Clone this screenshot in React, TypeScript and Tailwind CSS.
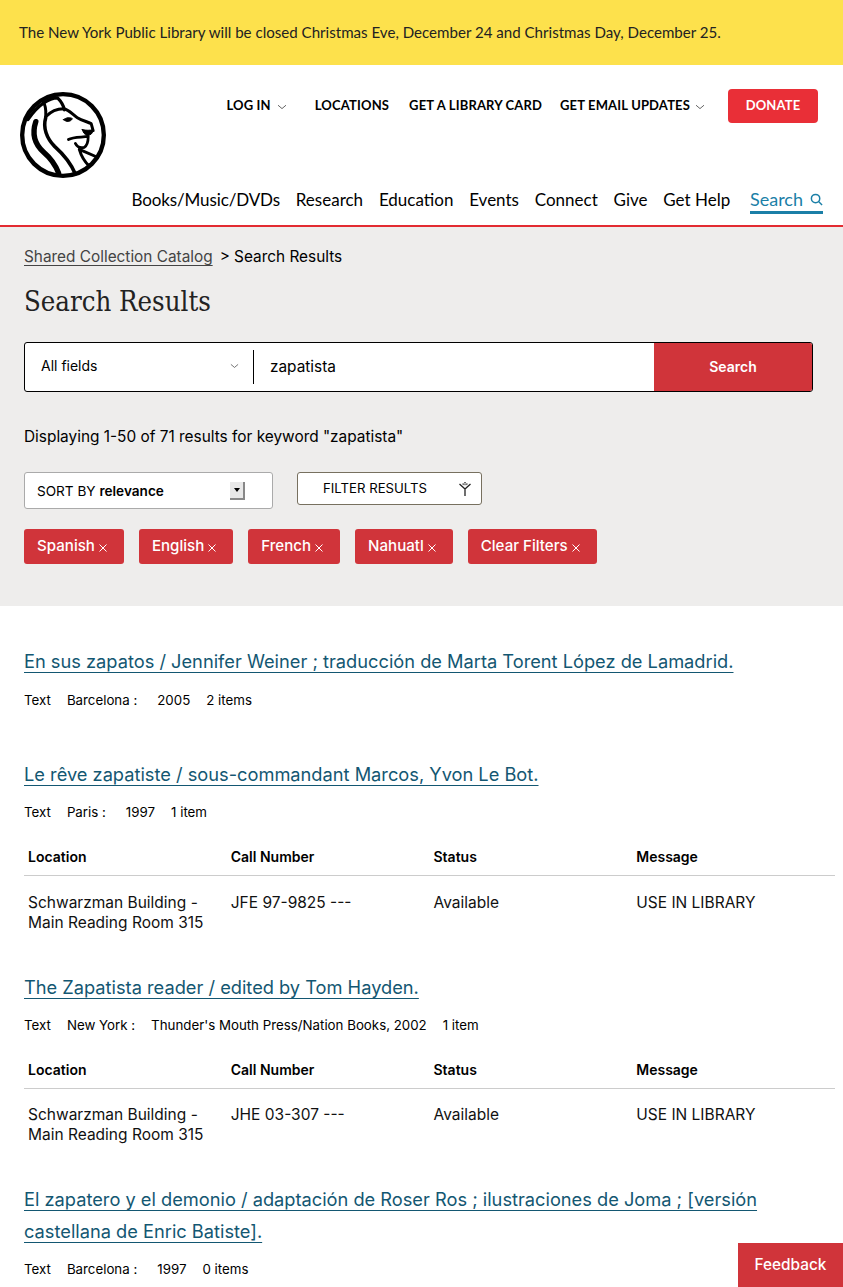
import React from "react";

const kievit = "font-['Lato','Noto_Sans',sans-serif]";

function Lion() {
  return (
    <svg viewBox="0 0 87 87" className="w-[86px] h-[86px] block" fill="none" stroke="#000" strokeLinecap="round" strokeLinejoin="round">
      <circle cx="43.5" cy="43.5" r="41.3" strokeWidth="4.4" fill="#fff" />
      <path d="M8 28 C12 22 18 15 24 11 C30 7 35 6 38 6 C42 10 44 14 45 18" strokeWidth="3.2" />
      <path d="M24 11 C27 16 26 22 26 25" strokeWidth="3" />
      <path d="M26 25 C32 19 38 17 44 17 C50 18 53 23 58 26 C63 29 68 30 72 32 L74 39" strokeWidth="3" />
      <path d="M26 26 C23 36 27 47 35 55 C44 63 51 71 56 83" strokeWidth="3.6" />
      <path d="M16 30 C12 42 15 53 24 61 C31 67 36 74 39 82" strokeWidth="5.4" />
      <path d="M63 38 C67 39 71 39 74 38 C74 42 71 44 68 44 C65 43 64 41 63 38 Z" fill="#000" strokeWidth="1" />
      <path d="M44 28 C47 25.5 51 25.5 53 27 C51 30.5 47 30.5 44 28 Z" fill="#000" strokeWidth="1" />
      <path d="M49 48 C54 45 62 46 69 45 C69 50 68 54 65 56 C61 57 58 56 56 52" strokeWidth="2.8" />
      <path d="M60 58 L76 65 M60 58 C62 65 65 70 70 75" strokeWidth="3" />
    </svg>
  );
}

function Chevron({ className = "" }: { className?: string }) {
  return (
    <svg viewBox="0 0 10 6" className={className} fill="none" stroke="#555" strokeWidth="0.9">
      <path d="M1 1.2 L5 4.6 L9 1.2" />
    </svg>
  );
}

function Tag({ label }: { label: string }) {
  return (
    <span className="flex h-[35px] items-center rounded-[3px] bg-[#d0343a] pl-[13px] pr-[17px] text-[15.1px] font-medium text-white">
      {label}
      <svg viewBox="0 0 8 8" className="ml-[4px] mt-[2px] h-[8px] w-[8px]" fill="none" stroke="#fff" strokeWidth="1">
        <path d="M0.5 0.5 L7.5 7.5 M7.5 0.5 L0.5 7.5" />
      </svg>
    </span>
  );
}

function Title({ children }: { children: React.ReactNode }) {
  return (
    <a className="text-[18.24px] leading-[32px] text-[#135772] underline decoration-1 underline-offset-[4px]">
      {children}
    </a>
  );
}

function Meta({ items }: { items: [string, string][] }) {
  return (
    <div className="flex text-[13.3px] leading-[20px] text-black">
      {items.map(([t, c]) => (
        <span key={t} className={c}>{t}</span>
      ))}
    </div>
  );
}

function Holdings({ call, rowClass }: { call: string; rowClass: string }) {
  return (
    <div className="w-[811px]">
      <div className="grid h-[38px] grid-cols-4 items-center border-b border-[#cccccc] pb-[1px] text-[14px] font-semibold text-black">
        <span className="pl-[4px]">Location</span>
        <span className="pl-[4px]">Call Number</span>
        <span className="pl-[4px]">Status</span>
        <span className="pl-[4px]">Message</span>
      </div>
      <div className={`grid grid-cols-4 text-[15.5px] leading-[19.5px] text-[#111] ${rowClass}`}>
        <span className="pl-[4px]">Schwarzman Building -<br />Main Reading Room 315</span>
        <span className="pl-[4px]">{call}</span>
        <span className="pl-[4px]">Available</span>
        <span className="pl-[4px]">USE IN LIBRARY</span>
      </div>
    </div>
  );
}

export default function App() {
  return (
    <div className="relative h-[1287px] overflow-hidden bg-white font-['Inter',sans-serif] text-black">
      <div className={`flex h-[65px] items-center bg-[#fde14c] pl-[19px] text-[15.1px] text-[#222] ${kievit}`}>
        The New York Public Library will be closed Christmas Eve, December 24 and Christmas Day, December 25.
      </div>

      <header className={`flex h-[162px] border-b-2 border-[#e32b31] ${kievit}`}>
        <div className="pl-[20px] pt-[27px]">
          <Lion />
        </div>
        <div className="flex flex-1 flex-col items-end pr-[20px]">
          <div className="flex h-[58px] items-start pr-[5px] pt-[24px] text-[13px] font-bold tracking-[0.15px] whitespace-nowrap text-black">
            <span className="flex h-[34px] items-center pb-[1px]">LOG IN<Chevron className="ml-[6px] mr-[28px] mt-[3px] h-[6px] w-[10px]" /></span>
            <span className="mr-[20px] flex h-[34px] items-center pb-[1px]">LOCATIONS</span>
            <span className="mr-[18px] flex h-[34px] items-center pb-[1px]">GET A LIBRARY CARD</span>
            <span className="flex h-[34px] items-center pb-[1px]">GET EMAIL UPDATES<Chevron className="ml-[5px] mr-[23px] mt-[3px] h-[6px] w-[10px]" /></span>
            <span className="flex h-[34px] w-[90px] items-center justify-center rounded-[4px] bg-[#e92f37] pb-[1px] text-white">DONATE</span>
          </div>
          <nav className="mt-[64px] flex items-start gap-[15.8px] text-[17px] leading-[24px] whitespace-nowrap text-black">
            <span className="pt-[1px] tracking-[-0.12px]">Books/Music/DVDs</span>
            <span className="pt-[1px]">Research</span>
            <span className="pt-[1px]">Education</span>
            <span className="pt-[1px]">Events</span>
            <span className="pt-[1px]">Connect</span>
            <span className="pt-[1px]">Give</span>
            <span className="pt-[1px]">Get Help</span>
            <span className="ml-[4px] flex items-center gap-[7px] border-b-[3px] border-[#1b7fa7] text-[18px] text-[#1b7fa7]">
              Search
              <svg viewBox="0 0 14 14" className="h-[13px] w-[13px]" fill="none" stroke="#1b7fa7" strokeWidth="1.6">
                <circle cx="6" cy="6" r="4.5" />
                <path d="M9.5 9.5 L13 13" />
              </svg>
            </span>
          </nav>
        </div>
      </header>

      <section className="h-[379px] bg-[#eeedec] px-[24px] pt-[20px]">
        <div className="text-[15.36px] leading-[20px]">
          <span className="text-[#444] underline decoration-1 underline-offset-[3px]">Shared Collection Catalog</span>
          <span className="ml-[7px]">&gt; Search Results</span>
        </div>
        <h1 className="mt-[17px] font-['DejaVu_Serif_Condensed','DejaVu_Serif',serif] text-[27.3px] leading-[36px] font-normal text-[#222]">Search Results</h1>
        <div className="mt-[22px] flex h-[50px] w-[789px] overflow-hidden rounded-[3px] border border-black bg-white">
          <div className="flex w-[228px] items-center justify-between pb-[3px] pl-[16px] pr-[14px] text-[14px]">
            <span>All fields</span>
            <Chevron className="h-[6px] w-[9px]" />
          </div>
          <div className="my-[7px] w-px bg-black" />
          <div className="flex flex-1 items-center pb-[1px] pl-[16px] text-[15.36px]">zapatista</div>
          <div className="flex w-[158px] items-center justify-center bg-[#d0343a] pb-[1px] text-[14px] font-semibold text-white">Search</div>
        </div>
        <div className="mt-[35px] text-[15.4px] leading-[20px]">Displaying 1-50 of 71 results for keyword "zapatista"</div>
        <div className="mt-[25px] flex items-start gap-[24px]">
          <div className="flex h-[37px] w-[249px] items-center justify-between rounded-[3px] border border-[#aaa] bg-white pl-[12px] pr-[27px] pt-[1px] text-[13.6px]">
            <span>SORT BY <b className="font-semibold">relevance</b></span>
            <span className="flex h-[18px] w-[15px] items-center justify-center border-r-2 border-b-2 border-[#888] bg-[#e8e8e8]">
              <span className="h-0 w-0 border-x-[3px] border-t-[4px] border-x-transparent border-t-black" />
            </span>
          </div>
          <div className="flex h-[33px] w-[185px] items-center justify-between rounded-[3px] border border-[#77705f] bg-white pl-[25px] pr-[9px] pt-[1px] text-[13.2px]">
            <span>FILTER RESULTS</span>
            <svg viewBox="0 0 14 16" className="h-[16px] w-[14px]" fill="none" stroke="#222" strokeWidth="1.3">
              <path d="M7 15 V8 M7 8 L1.5 3 M7 8 L12.5 3" />
              <path d="M4.8 2.5 L6 4.5 M9.2 2.5 L8 4.5 M7 1 V4" strokeDasharray="1.4 0.8" />
            </svg>
          </div>
        </div>
        <div className="mt-[20px] flex gap-[15px]">
          <Tag label="Spanish" />
          <Tag label="English" />
          <Tag label="French" />
          <Tag label="Nahuatl" />
          <Tag label="Clear Filters" />
        </div>
      </section>

      <main className="pl-[24px]">
        <div className="mt-[39px]"><Title>En sus zapatos / Jennifer Weiner ; traducción de Marta Torent López de Lamadrid.</Title></div>
        <div className="mt-[13px]">
          <Meta items={[["Text", "mr-[16px]"], ["Barcelona :", "mr-[20px]"], ["2005", "mr-[16px]"], ["2 items", ""]]} />
        </div>

        <div className="mt-[48px]"><Title>Le rêve zapatiste / sous-commandant Marcos, Yvon Le Bot.</Title></div>
        <div className="mt-[12px]">
          <Meta items={[["Text", "mr-[16px]"], ["Paris :", "mr-[20px]"], ["1997", "mr-[16px]"], ["1 item", ""]]} />
        </div>
        <div className="mt-[16px]"><Holdings call="JFE 97-9825 ---" rowClass="pt-[17px]" /></div>

        <div className="mt-[39px]"><Title>The Zapatista reader / edited by Tom Hayden.</Title></div>
        <div className="mt-[12px]">
          <Meta items={[["Text", "mr-[16px]"], ["New York :", "mr-[16px]"], ["Thunder's Mouth Press/Nation Books, 2002", "mr-[16px]"], ["1 item", ""]]} />
        </div>
        <div className="mt-[16px]"><Holdings call="JHE 03-307 ---" rowClass="pt-[16px]" /></div>

        <div className="mt-[39px] w-[780px]"><Title>El zapatero y el demonio / adaptación de Roser Ros ; ilustraciones de Joma ; [versión castellana de Enric Batiste].</Title></div>
        <div className="mt-[12px]">
          <Meta items={[["Text", "mr-[16px]"], ["Barcelona :", "mr-[20px]"], ["1997", "mr-[16px]"], ["0 items", ""]]} />
        </div>
      </main>

      <div className="fixed bottom-0 right-0 flex h-[44px] w-[105px] items-center justify-center bg-[#d0343a] text-[15.36px] font-medium text-white">Feedback</div>
    </div>
  );
}
